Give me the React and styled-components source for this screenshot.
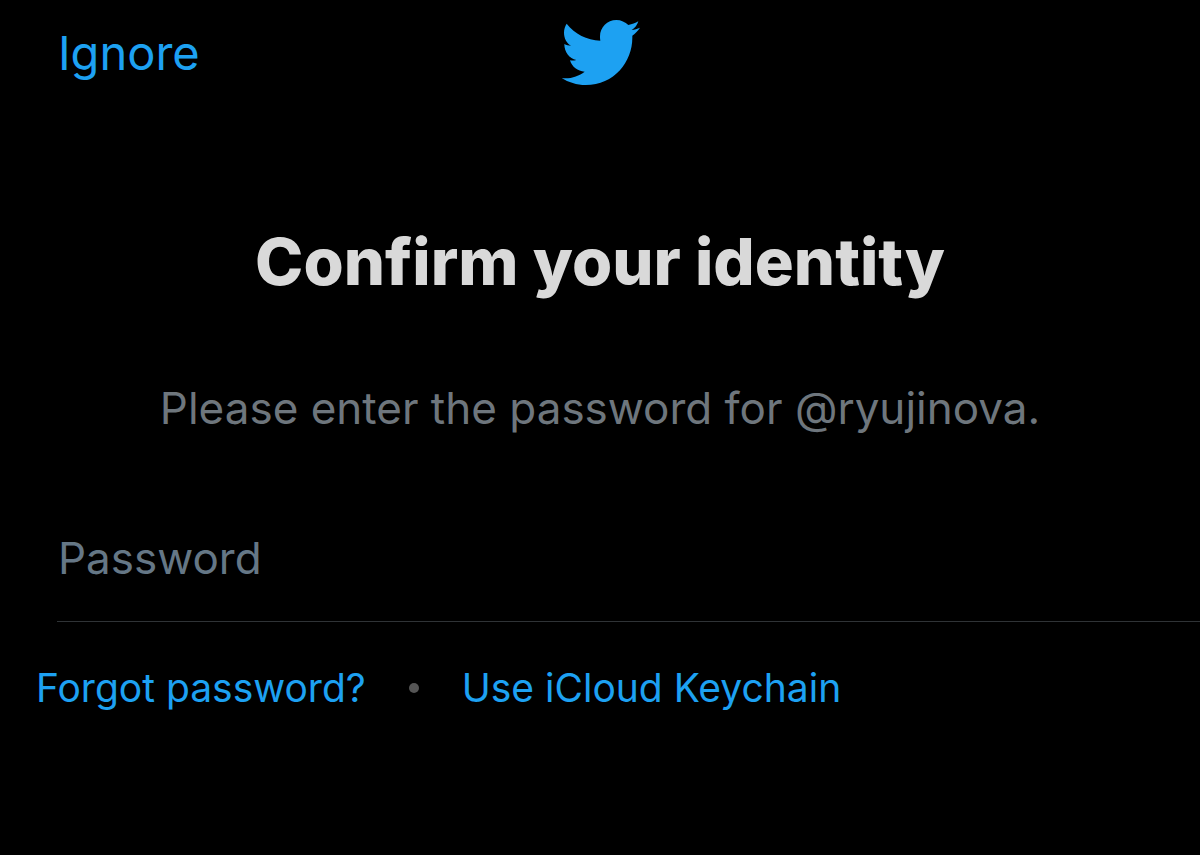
import { useState } from 'react';
import { createGlobalStyle, styled } from 'styled-components';

const GlobalStyle = createGlobalStyle`
  * {
    box-sizing: border-box;
  }

  body {
    margin: 0;
    background-color: #000;
    font-family: Inter, 'Liberation Sans', sans-serif;
  }
`;

const Page = styled.div`
  min-height: 100vh;
  background-color: #000;
`;

const Header = styled.header`
  display: grid;
  grid-template-columns: 1fr auto 1fr;
  align-items: center;
  height: 106px;
  padding: 0 58px;
`;

const IgnoreButton = styled.button`
  justify-self: start;
  padding: 0;
  border: none;
  background: none;
  color: #1da1f2;
  font-family: inherit;
  font-size: 47px;
  line-height: 56px;
  cursor: pointer;
`;

const Logo = styled.svg`
  display: block;
  width: 80px;
  height: 68px;
  fill: #1da1f2;
`;

const Title = styled.h1`
  margin: 116px 0 0;
  color: #d9d9d9;
  font-size: 65px;
  font-weight: 800;
  line-height: 80px;
  text-align: center;
`;

const Message = styled.p`
  margin: 78px 0 0;
  color: #6e767d;
  font-size: 44px;
  line-height: 56px;
  text-align: center;
`;

const Field = styled.div`
  margin: 92px 0 0 57px;
  border-bottom: 1px solid #2f3336;
`;

const Input = styled.input`
  display: block;
  width: 100%;
  height: 93px;
  padding: 0 0 34px 1px;
  border: none;
  outline: none;
  background: none;
  color: #d9d9d9;
  font-family: inherit;
  font-size: 44px;

  &::placeholder {
    color: #657786;
    opacity: 1;
  }
`;

const Links = styled.nav`
  display: flex;
  align-items: center;
  gap: 43px;
  margin-top: 42px;
  padding: 0 36px;
`;

const TextLink = styled.a`
  color: #1da1f2;
  font-size: 39px;
  line-height: 48px;
  text-decoration: none;
`;

const Dot = styled.span`
  width: 10px;
  height: 10px;
  border-radius: 50%;
  background-color: #555;
`;

export default function App() {
  const [password, setPassword] = useState('');

  return (
    <Page>
      <GlobalStyle />
      <Header>
        <IgnoreButton type="button">Ignore</IgnoreButton>
        <Logo viewBox="60 57 240 204" role="img" aria-label="Twitter">
          <path d="M80 71C105 102 140 120 181 122C180 118 180 113 180 109C180 82 202 60 229 60C243 60 256 66 265 75C276 73 286 69 295 64C292 75 285 84 275 90C284 89 292 86 300 83C294 92 286 100 277 107C277 109 277 111 277 113C277 185 223 255 137 255C110 255 85 247 65 234C69 235 72 235 76 235C98 235 118 227 134 215C113 214 96 201 90 181C96 182 102 182 109 180C88 176 73 157 73 132C79 135 86 137 93 137C80 129 72 115 72 98C72 88 75 79 80 71Z" />
        </Logo>
      </Header>
      <main>
        <Title>Confirm your identity</Title>
        <Message>Please enter the password for @ryujinova.</Message>
        <Field>
          <Input
            type="password"
            aria-label="Password"
            placeholder="Password"
            value={password}
            onChange={(event) => setPassword(event.target.value)}
          />
        </Field>
        <Links>
          <TextLink href="#forgot">Forgot password?</TextLink>
          <Dot />
          <TextLink href="#keychain">Use iCloud Keychain</TextLink>
        </Links>
      </main>
    </Page>
  );
}
